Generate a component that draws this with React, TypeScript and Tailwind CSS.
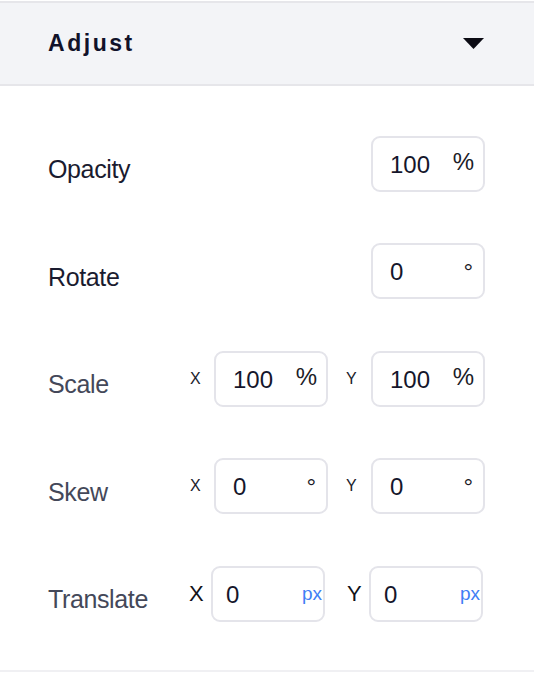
const font = { fontFamily: '"Liberation Sans", Arial, sans-serif' };

function Box({ value, unit, kind }: { value: string; unit: string; kind: "pct" | "deg" | "px" }) {
  return (
    <div
      className={`w-[114px] h-[56px] shrink-0 rounded-[9px] border-2 border-[#e4e4ea] bg-white flex items-center justify-between ${
        kind === "px" ? "pl-[13px] pr-[9px]" : "pl-[17px] pr-[9px]"
      }`}
    >
      <span className="text-[24px] leading-none text-[#15162b] translate-y-[1px]">{value}</span>
      {kind === "pct" && <span className="text-[24px] leading-none text-[#1c1c28] -translate-y-[2px]">{unit}</span>}
      {kind === "deg" && <span className="text-[24px] leading-none text-[#1c1c28] translate-y-[1px] pr-[1px]">{unit}</span>}
      {kind === "px" && <span className="text-[19px] leading-none text-[#3f7ef5] -mr-[8px]">{unit}</span>}
    </div>
  );
}

function Row({ label, dark, children }: { label: string; dark?: boolean; children: React.ReactNode }) {
  return (
    <div className="h-[107.5px] flex items-center justify-between">
      <span
        className={`text-[25px] leading-none tracking-[-0.015em] translate-y-[6px] ${
          dark ? "text-[#1a1b2f]" : "text-[#444859]"
        }`}
      >
        {label}
      </span>
      {children}
    </div>
  );
}

export default function App() {
  return (
    <div className="w-[534px] h-[674px] bg-white" style={font}>
      <div className="h-px" />
      <div className="border-t-2 border-[#e6e6ea]" />
      <div className="h-[83px] bg-[#f3f4f7] border-b-2 border-[#e6e6ea] flex items-center justify-between pl-[48px] pr-[50px]">
        <span className="text-[23px] font-bold tracking-[0.11em] text-[#11122a]">Adjust</span>
        <svg width="21" height="11" viewBox="0 0 21 11">
          <path d="M0 0 L21 0 L10.5 11 Z" fill="#0b0b14" />
        </svg>
      </div>
      <div className="pt-[24px] pb-[22px] pl-[48px] pr-[49px] border-b-2 border-[#f0f0f3]">
        <Row label="Opacity" dark>
          <Box value="100" unit="%" kind="pct" />
        </Row>
        <Row label="Rotate" dark>
          <Box value="0" unit="°" kind="deg" />
        </Row>
        <Row label="Scale">
          <div className="flex items-center gap-[18px]">
            <div className="flex items-center">
              <span className="w-[25px] text-[16px] text-[#20212b] pl-[1px]">X</span>
              <Box value="100" unit="%" kind="pct" />
            </div>
            <div className="flex items-center">
              <span className="w-[25px] text-[16px] text-[#20212b]">Y</span>
              <Box value="100" unit="%" kind="pct" />
            </div>
          </div>
        </Row>
        <Row label="Skew">
          <div className="flex items-center gap-[18px]">
            <div className="flex items-center">
              <span className="w-[25px] text-[16px] text-[#20212b] pl-[1px]">X</span>
              <Box value="0" unit="°" kind="deg" />
            </div>
            <div className="flex items-center">
              <span className="w-[25px] text-[16px] text-[#20212b]">Y</span>
              <Box value="0" unit="°" kind="deg" />
            </div>
          </div>
        </Row>
        <Row label="Translate">
          <div className="flex items-center gap-[22px] mr-[2px]">
            <div className="flex items-center">
              <span className="w-[22px] text-[22px] text-[#111218]">X</span>
              <Box value="0" unit="px" kind="px" />
            </div>
            <div className="flex items-center">
              <span className="w-[22px] text-[22px] text-[#111218]">Y</span>
              <Box value="0" unit="px" kind="px" />
            </div>
          </div>
        </Row>
      </div>
    </div>
  );
}
